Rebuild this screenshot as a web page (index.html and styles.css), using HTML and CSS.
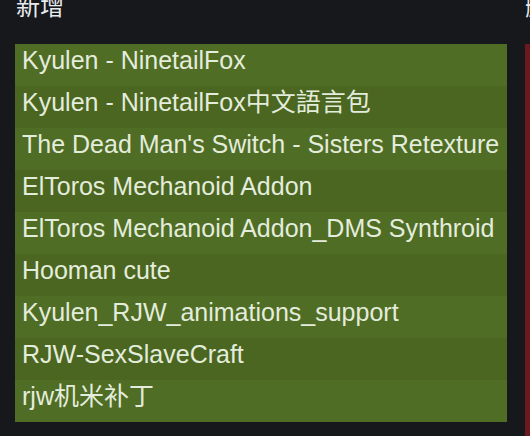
FILE: index.html
```html
<!DOCTYPE html>
<html lang="zh">
<head>
<meta charset="utf-8">
<link rel="stylesheet" href="styles.css">
</head>
<body>
<div class="board">
  <section class="col col-added">
    <h2 class="col-title">新增</h2>
    <ul class="list list-added">
      <li class="row">Kyulen - NinetailFox</li>
      <li class="row">Kyulen - NinetailFox中文語言包</li>
      <li class="row">The Dead Man's Switch - Sisters Retexture</li>
      <li class="row">ElToros Mechanoid Addon</li>
      <li class="row">ElToros Mechanoid Addon_DMS Synthroid</li>
      <li class="row">Hooman cute</li>
      <li class="row">Kyulen_RJW_animations_support</li>
      <li class="row">RJW-SexSlaveCraft</li>
      <li class="row">rjw机米补丁</li>
    </ul>
  </section>
  <section class="col col-removed">
    <h2 class="col-title">删除</h2>
    <ul class="list list-removed">
      <li class="row">&nbsp;</li>
    </ul>
  </section>
</div>
</body>
</html>
```

FILE: styles.css
```css
html, body {
  margin: 0;
  padding: 0;
}
body {
  background: #16181c;
  width: 530px;
  height: 436px;
  overflow: hidden;
  font-family: "Liberation Sans", Arial, "Noto Sans CJK SC", sans-serif;
  color: #e4ecdc;
}
.board {
  display: flex;
  gap: 18px;
  padding-left: 15px;
  margin-top: -8px;
}
.col {
  flex: none;
  display: flex;
  flex-direction: column;
}
.col-added {
  width: 492px;
}
.col-removed {
  width: 300px;
}
.col-title {
  margin: 0;
  height: 52px;
  font-weight: normal;
  font-size: 24px;
  line-height: 30px;
  color: #e8ebee;
  padding-left: 1px;
}
.col-removed .col-title {
  padding-left: 0;
}
.list {
  list-style: none;
  margin: 0;
  padding: 0;
}
.list-added {
  background: #4d6a22;
}
.list-removed {
  background: #6a1a1e;
  height: 400px;
}
.row {
  height: 42px;
  box-sizing: border-box;
  padding: 1px 0 0 7px;
  font-size: 25px;
  line-height: 30px;
  white-space: nowrap;
}
.list-added .row:nth-child(odd) {
  background: #4f6d25;
}
.list-added .row:nth-child(even) {
  background: #4a6620;
}
```
